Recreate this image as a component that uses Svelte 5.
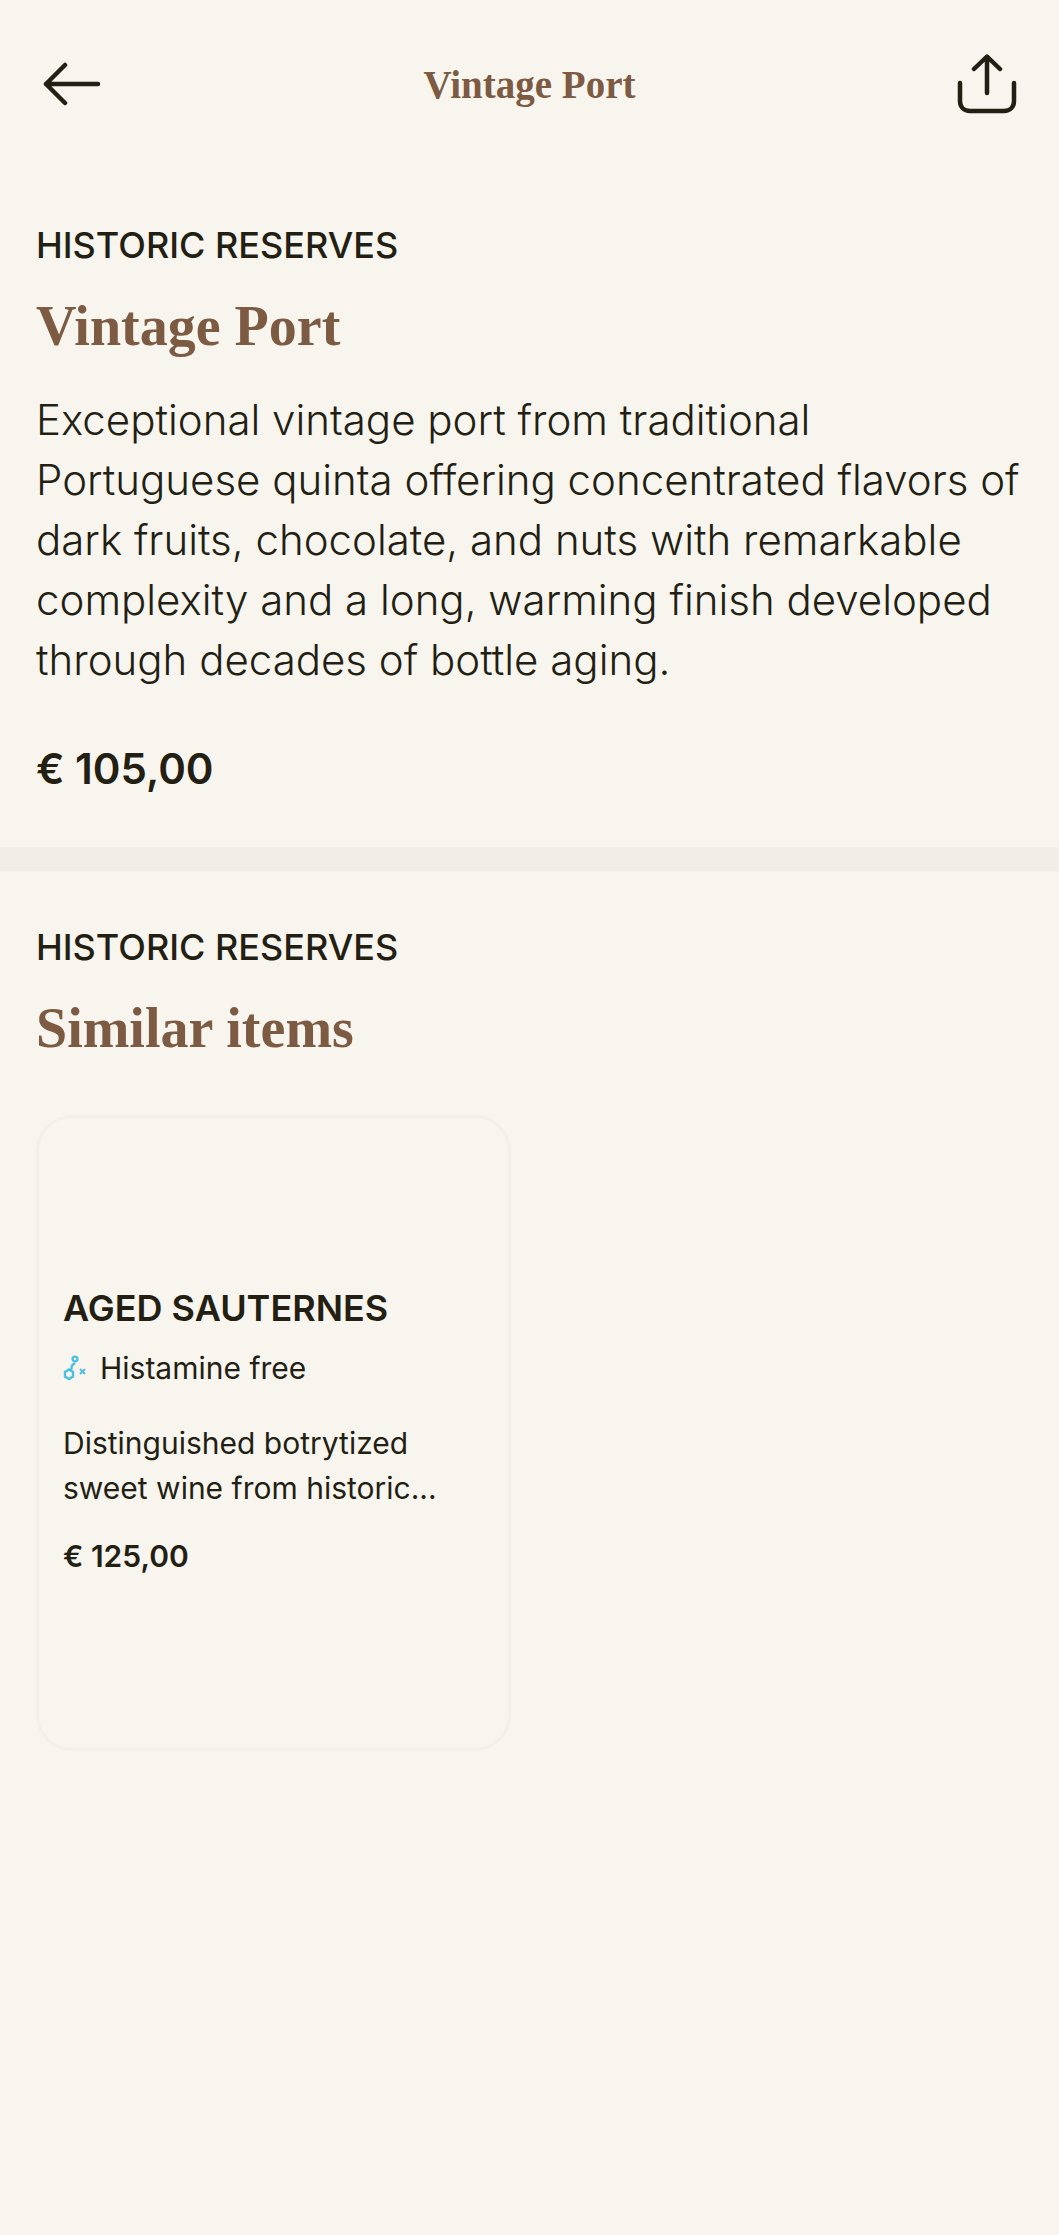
<script>
	const description =
		"Exceptional vintage port from traditional Portuguese quinta offering concentrated flavors of dark fruits, chocolate, and nuts with remarkable complexity and a long, warming finish developed through decades of bottle aging.";
</script>

<div class="page">
	<header class="topbar">
		<button class="icon-btn" aria-label="Back">
			<svg width="60" height="44" viewBox="0 0 60 44" fill="none">
				<path d="M4 22H56M23 3L4 22L23 41" stroke="#231f13" stroke-width="4.5" stroke-linecap="round" stroke-linejoin="round" />
			</svg>
		</button>
		<span class="topbar-title">Vintage Port</span>
		<button class="icon-btn" aria-label="Share">
			<svg width="60" height="60" viewBox="0 0 60 60" fill="none">
				<path d="M30 39V3M17 15L30 2.5L43 15M3 29V47C3 53 7 57 13 57H47C53 57 57 53 57 47V29" stroke="#231f13" stroke-width="4.5" stroke-linecap="round" stroke-linejoin="round" />
			</svg>
		</button>
	</header>

	<section class="detail">
		<div class="eyebrow">HISTORIC RESERVES</div>
		<h1 class="heading">Vintage Port</h1>
		<p class="description">{description}</p>
		<div class="price">€ 105,00</div>
	</section>

	<div class="divider"></div>

	<section class="similar">
		<div class="eyebrow">HISTORIC RESERVES</div>
		<h2 class="heading">Similar items</h2>

		<article class="card">
			<h3 class="card-title">AGED SAUTERNES</h3>
			<div class="tag">
				<svg width="24" height="26" viewBox="0 0 24 26" fill="none" stroke="#4cc0e4" stroke-width="2.4">
					<path d="M6 14.5L10 17V21.5L6 24L2 21.5V17Z" />
					<path d="M8 15.5L9 10.5L12 8" />
					<circle cx="12" cy="4" r="2.4" />
					<path d="M17 14L22 19M22 14L17 19" stroke-width="1.8" />
				</svg>
				<span>Histamine free</span>
			</div>
			<p class="card-text">Distinguished botrytized sweet wine from historic...</p>
			<div class="card-price">€ 125,00</div>
		</article>
	</section>
</div>

<style>
	:global(body) {
		margin: 0;
		background: #f8f5ef;
	}
	.page {
		min-height: 2235px;
		background: #f8f5ef;
		color: #231f13;
		font-family: Inter, "Liberation Sans", sans-serif;
	}
	.topbar {
		display: flex;
		align-items: center;
		justify-content: space-between;
		height: 168px;
		padding: 0 42px;
	}
	.icon-btn {
		display: flex;
		padding: 0;
		background: none;
		border: none;
	}
	.topbar-title {
		font-family: "Liberation Serif", serif;
		font-size: 39px;
		font-weight: 700;
		color: #7d5a42;
	}
	.detail {
		padding: 55px 36px 53px;
	}
	.eyebrow {
		font-size: 36px;
		line-height: 44px;
		font-weight: 450;
	}
	.heading {
		margin: 24px 0 0;
		font-family: "Liberation Serif", serif;
		font-size: 56px;
		line-height: 70px;
		font-weight: 700;
		color: #7d5a42;
	}
	.description {
		margin: 29px 0 0;
		font-size: 42px;
		line-height: 60px;
		font-weight: 300;
	}
	.price {
		margin-top: 54px;
		font-size: 42px;
		line-height: 50px;
		font-weight: 600;
	}
	.divider {
		height: 24px;
		background: #f1eee8;
	}
	.similar {
		padding: 54px 36px 0;
	}
	.card {
		box-sizing: border-box;
		width: 475px;
		height: 636px;
		margin-top: 52px;
		padding: 168px 24px 0;
		border: 3px solid #f3f0e9;
		border-radius: 36px;
	}
	.card-title {
		margin: 0;
		font-size: 36px;
		line-height: 44px;
		font-weight: 600;
	}
	.tag {
		display: flex;
		align-items: center;
		gap: 13px;
		margin-top: 20px;
		font-size: 30px;
		line-height: 36px;
	}
	.card-text {
		margin: 35px 0 0;
		font-size: 30px;
		line-height: 45px;
	}
	.card-price {
		margin-top: 27px;
		font-size: 30px;
		line-height: 36px;
		font-weight: 600;
	}
</style>
